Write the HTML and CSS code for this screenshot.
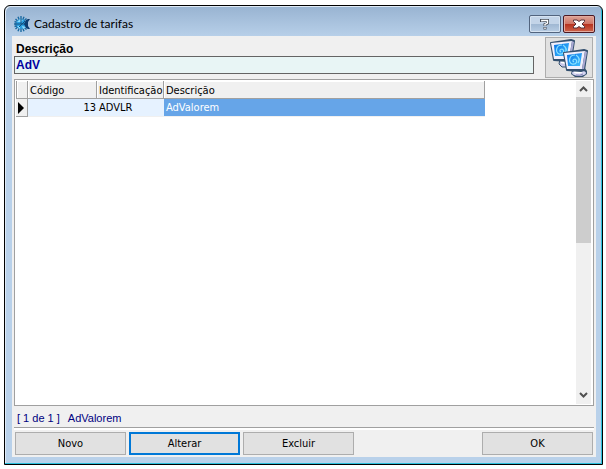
FILE: index.html
```html
<!DOCTYPE html>
<html lang="pt-BR">
<head>
    <meta charset="UTF-8">
    <title>Cadastro de tarifas</title>
    <link rel="stylesheet" href="styles.css">
</head>
<body>
    <div class="window">
        <!-- Barra de título -->
        <header class="title-bar">
            <svg class="app-icon" width="16" height="16" viewBox="0 0 16 16" fill="none">
                <path d="M7 0v16M0 8h8M1.500 3l11 10.500M12.500 2.500L1.500 13M4 .8l6 14.400M.5 5.500l13 5M10 .8L4 15.200M.5 10.500l13-5" stroke="#1b6ba3" stroke-width="1.400"/>
                <circle cx="7" cy="8" r="4.800" fill="#2b9fe0"/>
                <path d="M3 6l3-3 3 1-2 2zM8 10l4 1-3 2zM3 10h3v3z" fill="#8bdcff"/>
                <path d="M1 8h10M7 3v5M5 11l3-3 3-3" stroke="#125080"/>
                <path d="M16 3h-2l-2 1-2 4 2 4 2 1h2l-2-3V6z" fill="#0d3c70"/>
            </svg>
            <h1 class="title">Cadastro de tarifas</h1>
            <button class="caption-btn" type="button" aria-label="Ajuda">
                <svg width="10" height="12" viewBox="0 0 10 12" fill="none">
                    <path d="M1.500 4V2.500h6V5.200L5 6.500V8M5 9v2.500" stroke="#444b55" stroke-width="3"/>
                    <path d="M1.800 3.500v-1h5.700v2.700L5 6.500V7.800M5 9.500v1.500" stroke="#fff" stroke-width="1.400"/>
                </svg>
            </button>
            <button class="caption-btn close" type="button" aria-label="Fechar">
                <svg width="12" height="10" viewBox="0 0 12 10" fill="none">
                    <path d="M.5 1h3.500l2 1.500L8 1h3.500v1.500L9 5l2.500 2.500V9H8L6 7.500 4 9H.5V7.500L3 5 .5 2.500z" fill="#fff" stroke="#54323a"/>
                </svg>
            </button>
        </header>

        <main class="client">
            <!-- Filtro -->
            <div class="filter">
                <div class="field">
                    <label for="descricao">Descrição</label>
                    <input id="descricao" type="text" value="AdV">
                </div>
                <button class="search-btn" type="button" aria-label="Pesquisar">
                    <svg width="38" height="38" viewBox="0 0 38 38">
                        <defs>
                            <linearGradient id="screen" x1="0" y1="0" x2="1" y2="1">
                                <stop offset="0" stop-color="#0872e6"/>
                                <stop offset="1" stop-color="#3fc0ff"/>
                            </linearGradient>
                            <g id="monitor">
                                <path d="M1 3L21 0l3 1-3 19-3 1-14-1z" fill="#34506f" stroke="#34506f" stroke-width="2" stroke-linejoin="round"/>
                                <path d="M1 3L22 1l-3 18-15 0z" fill="#f0effc"/>
                                <path d="M22 1l2 1-3 17h-2z" fill="#aaa9d3"/>
                                <path d="M4 5l15-2-2 13-12 0z" fill="url(#screen)"/>
                                <path d="M12 5C6 5 5 12 9 14c5 1 6-4 3-5-2 0-3 2-1 3M13 5c3 2 4 5 2 8" stroke="#8be1ff" stroke-width="1.200" fill="none"/>
                            </g>
                        </defs>
                        <!-- monitor de trás -->
                        <path d="M10 20h8v8h-6l-3-3z" fill="#c8c8e8" stroke="#34506f"/>
                        <path d="M11 22h4v3l-4-1z" fill="#fff"/>
                        <use href="#monitor" x="0" y="1"/>
                        <!-- monitor da frente -->
                        <path d="M25 29l9-1 3 4v3l-4 3h-8l-4-3 1-4z" fill="#34506f"/>
                        <path d="M26 30h7v3h-7z" fill="#9fa0ca"/>
                        <ellipse cx="29" cy="34" rx="7" ry="3" fill="#d5d5f2"/>
                        <ellipse cx="28" cy="33" rx="4" ry="1.500" fill="#fff"/>
                        <path d="M26 36q4 1 7-1" stroke="#8585b8" fill="none"/>
                        <use href="#monitor" x="13" y="11"/>
                    </svg>
                </button>
            </div>

            <!-- Lista de tarifas -->
            <div class="grid-box">
                <div class="grid-scroll">
                    <table class="grid">
                        <colgroup>
                            <col class="col-mark">
                            <col class="col-code">
                            <col class="col-ident">
                            <col class="col-desc">
                        </colgroup>
                        <thead>
                            <tr>
                                <th></th>
                                <th>Código</th>
                                <th>Identificação</th>
                                <th>Descrição</th>
                            </tr>
                        </thead>
                        <tbody>
                            <tr>
                                <td class="mark"><svg width="6" height="12" viewBox="0 0 6 12"><path d="M0 0l6 6-6 6z"/></svg></td>
                                <td class="number">13</td>
                                <td>ADVLR</td>
                                <td class="selected">AdValorem</td>
                            </tr>
                        </tbody>
                    </table>
                </div>
                <div class="scrollbar">
                    <svg width="15" height="16" viewBox="0 0 15 16"><path d="M4 10l3.500-3.500L11 10" fill="none" stroke="#505050" stroke-width="2"/></svg>
                    <div class="track"><div class="thumb"></div></div>
                    <svg width="15" height="16" viewBox="0 0 15 16"><path d="M4 5l3.500 3.500L11 5" fill="none" stroke="#505050" stroke-width="2"/></svg>
                </div>
            </div>

            <div class="status">
                <span>[ 1 de 1 ]</span>
                <span>AdValorem</span>
            </div>

            <!-- Ações -->
            <footer class="actions">
                <button class="btn" type="button">Novo</button>
                <button class="btn default" type="button">Alterar</button>
                <button class="btn" type="button">Excluir</button>
                <button class="btn ok" type="button">OK</button>
            </footer>
        </main>
    </div>
</body>
</html>
```
FILE: styles.css
```css
* {
    box-sizing: border-box;
    margin: 0;
    padding: 0;
}

body {
    display: flex;
    height: 100vh;
    padding: 5px 3px 4px 4px;
    background: #fff;
    font: 11px/13px "DejaVu Sans Condensed", "DejaVu Sans", sans-serif;
    color: #000;
}

button,
input {
    font: inherit;
    color: inherit;
}

.window {
    flex: 1;
    display: flex;
    flex-direction: column;
    min-width: 0;
    padding: 0 6px 7px 7px;
    border: 1px solid #000;
    border-radius: 6px 6px 0 0;
    background: linear-gradient(#98b3d1, #b9d1ea 32px, #b9d1ea);
    box-shadow: inset -1px -1px #2cc0dc, inset 1px 1px #dfeaf5;
}

/* Barra de título */
.title-bar {
    display: flex;
    align-items: center;
    height: 30px;
    padding: 5px 1px 0 2px;
}

.title {
    flex: 1;
    margin-left: 4px;
    font: 12px/16px Lato, "Open Sans", sans-serif;
}

.caption-btn {
    display: flex;
    align-items: center;
    justify-content: center;
    width: 32px;
    height: 18px;
    margin-left: 2px;
    border: 1px solid #52647e;
    border-radius: 2px;
    background: linear-gradient(#c3d4e8 50%, #9fb7d2 50%, #b8cde4);
    box-shadow: inset 0 0 0 1px #d6e3f1;
}

.caption-btn.close {
    border-color: #4c1a24;
    background: linear-gradient(#dda397, #cf7465 50%, #b5301e 50%, #ce654c);
    box-shadow: inset 0 0 0 1px #e2aa9f;
}

.client {
    flex: 1;
    display: flex;
    flex-direction: column;
    min-height: 0;
    padding: 1px 2px 2px;
    background: #f0f0f0;
}

/* Filtro */
.filter {
    display: flex;
    align-items: flex-end;
    gap: 11px;
    height: 42px;
    padding-right: 1px;
}

.field {
    flex: 1;
    display: flex;
    flex-direction: column;
    padding-bottom: 5px;
    font: bold 12px/14px "Liberation Sans", Arial, sans-serif;
}

.field label {
    padding-left: 2px;
}

.field input {
    width: 100%;
    height: 18px;
    padding: 0 1px;
    border: 1px solid #646464;
    background: #e8f5f5;
    color: #0000a0;
    outline: none;
}

.search-btn {
    display: flex;
    align-items: center;
    justify-content: center;
    width: 48px;
    height: 41px;
    margin-bottom: 1px;
    border: 1px solid #adadad;
    background: #e1e1e1;
}

/* Lista */
.grid-box {
    flex: 1;
    display: flex;
    min-height: 0;
    padding: 1px 2px 1px 1px;
    border: 1px solid #a0a0a0;
    background: #fff;
}

.grid-scroll {
    flex: 1;
    min-width: 0;
    overflow: hidden;
}

.grid {
    width: 469px;
    border-collapse: separate;
    border-spacing: 0;
    table-layout: fixed;
}

.col-mark {
    width: 12px;
}

.col-code {
    width: 69px;
}

.col-ident {
    width: 67px;
}

.grid th,
.grid td {
    padding: 0 1px 0 2px;
    text-align: left;
    font-weight: normal;
    line-height: 15px;
    white-space: nowrap;
}

.grid th {
    height: 18px;
    padding-top: 1px;
    border-right: 1px solid #a0a0a0;
    border-bottom: 1px solid #a0a0a0;
    background: #f0f0f0;
    box-shadow: inset 1px 1px #fff;
}

.grid th:first-child {
    border-left: 1px solid #a0a0a0;
}

.grid td {
    height: 18px;
    border-bottom: 1px solid #f0f0f0;
    background: #e6f2ff;
}

.grid td.mark {
    border-right: 1px solid #a0a0a0;
    border-bottom-color: #a0a0a0;
    background: #f0f0f0;
}

.mark svg {
    display: block;
}

.grid td.number {
    text-align: right;
}

.grid td.selected {
    background: #66a5e8;
    color: #fff;
}

.scrollbar {
    display: flex;
    flex-direction: column;
    width: 15px;
    background: #f0f0f0;
}

.track {
    flex: 1;
}

.thumb {
    height: 50%;
    background: #cdcdcd;
}

/* Rodapé */
.status {
    display: flex;
    gap: 8px;
    height: 21px;
    padding: 0 3px;
    font: 11px/25px "Liberation Sans", Arial, sans-serif;
    color: #000080;
}

.actions {
    display: flex;
    gap: 3px;
    padding: 4px 1px 0;
    border-top: 1px solid #a0a0a0;
    box-shadow: inset 0 2px #fff;
}

.btn {
    width: 111px;
    height: 23px;
    border: 1px solid #adadad;
    background: #e1e1e1;
}

.btn.default {
    border: 2px solid #0078d7;
}

.btn.ok {
    margin-left: auto;
}
```
